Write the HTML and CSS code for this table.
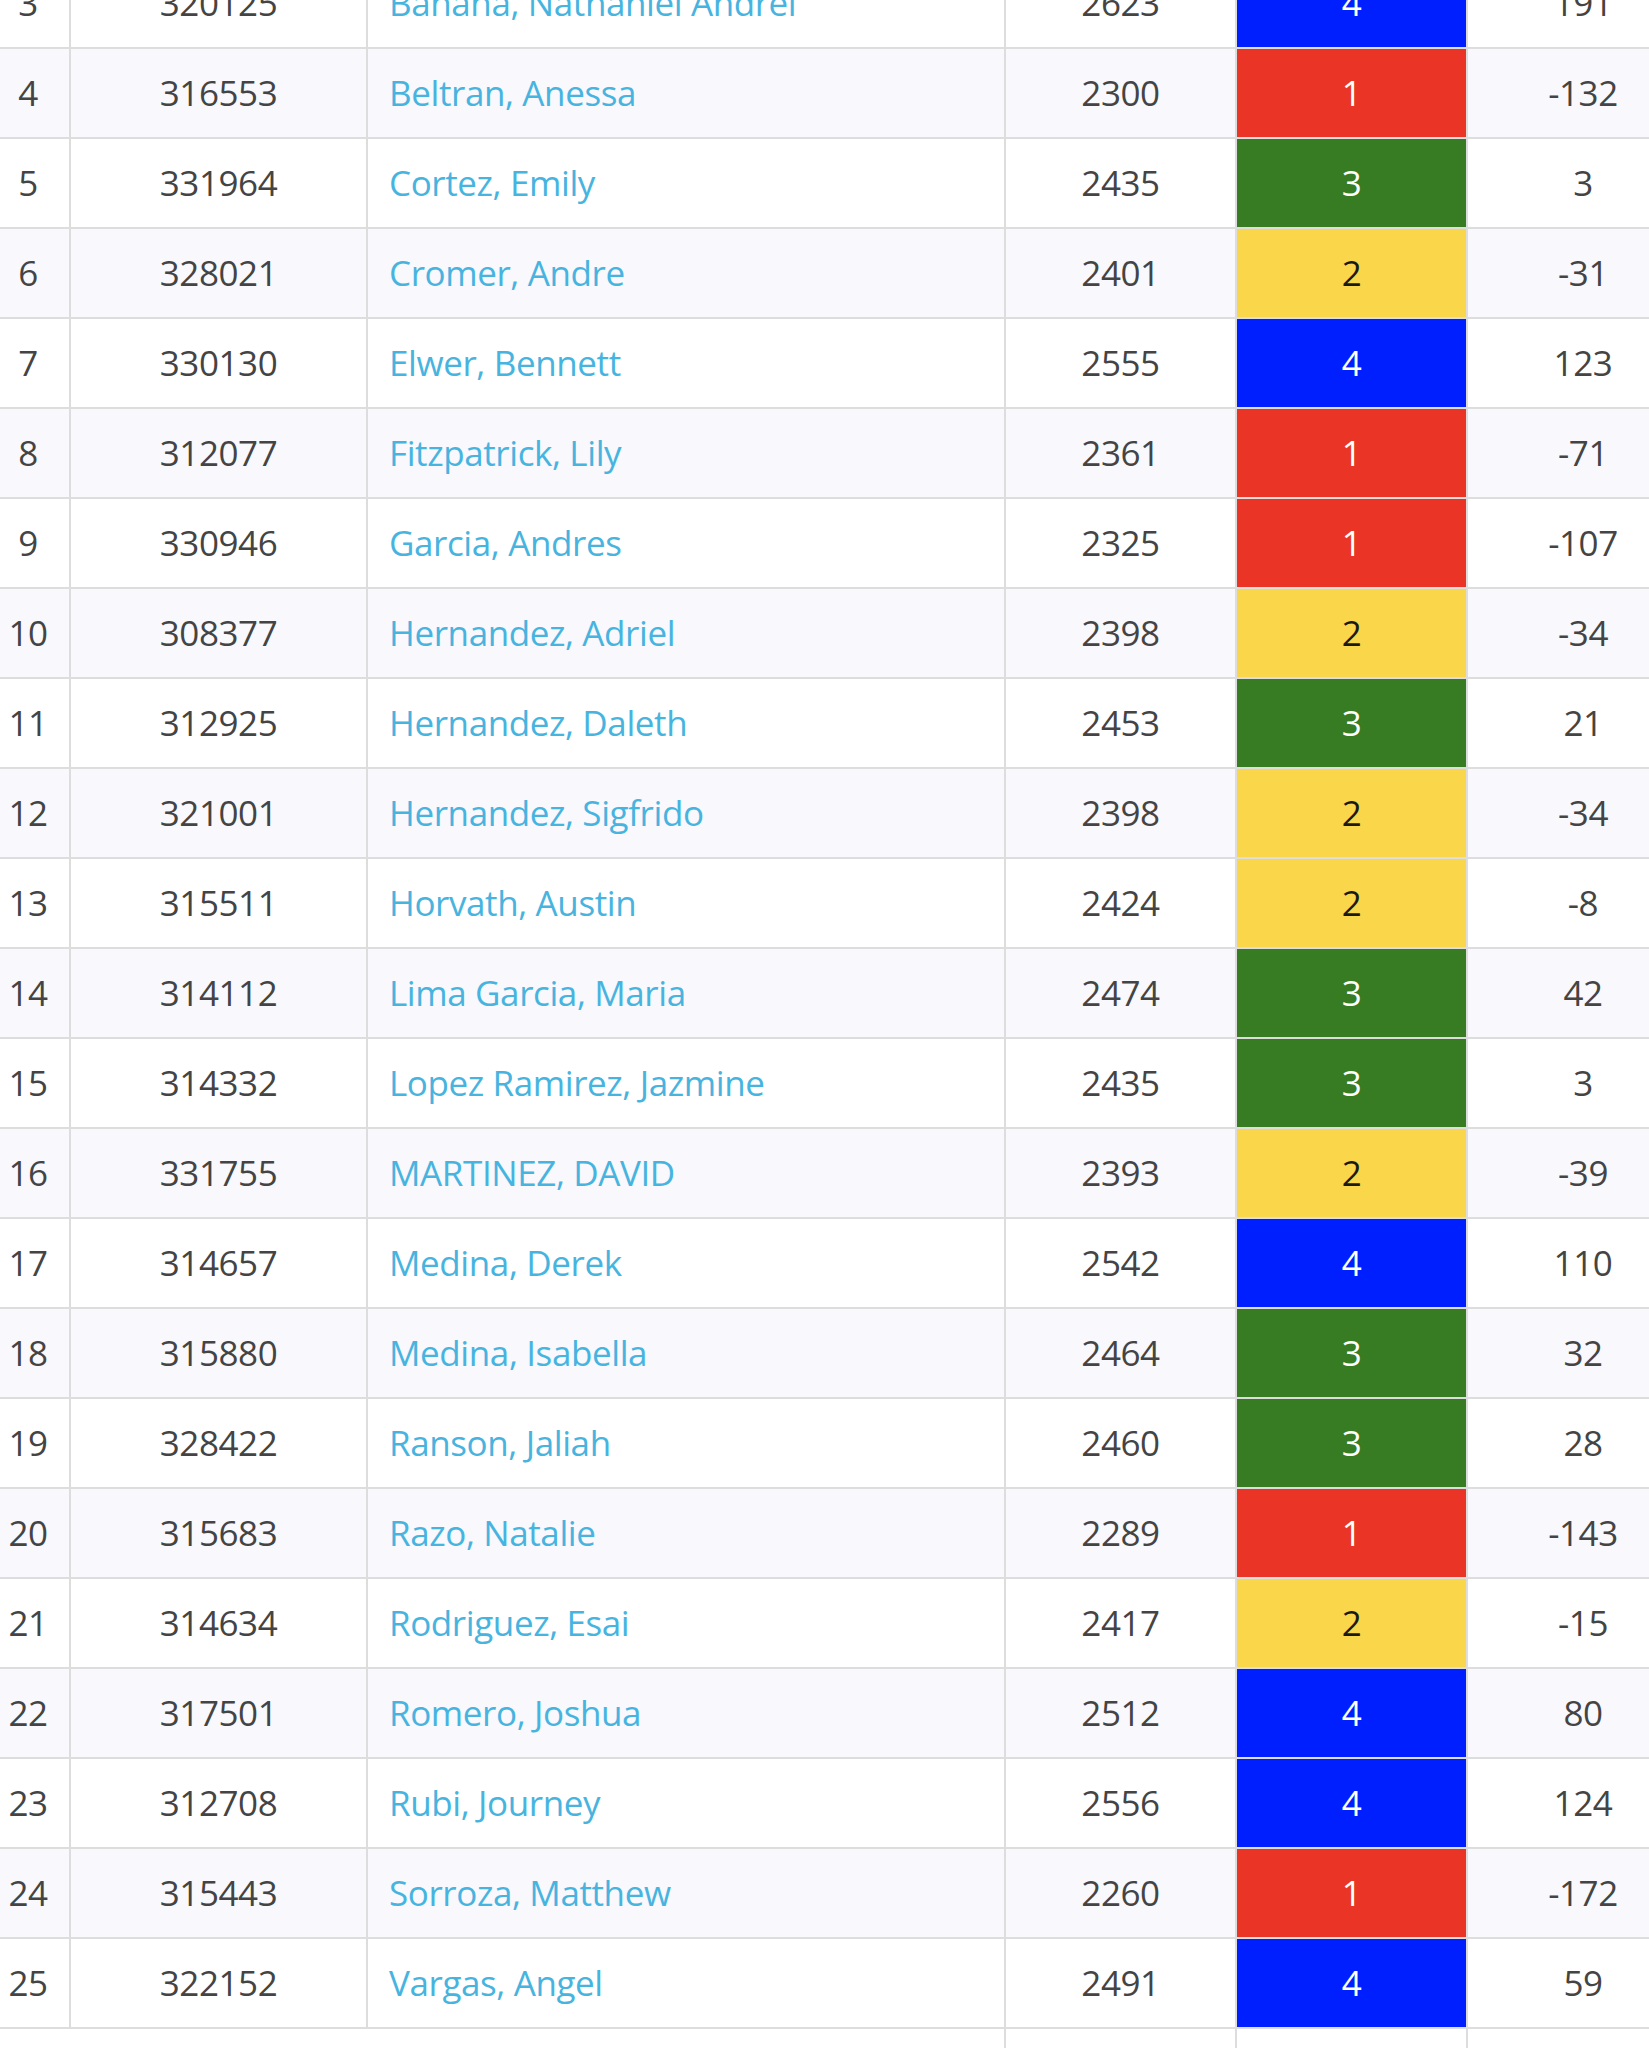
FILE: index.html
```html
<!DOCTYPE html>
<html lang="en">
<head>
<meta charset="utf-8">
<title>Roster</title>
<link rel="stylesheet" href="styles.css">
</head>
<body>
<div class="wrap">
<table class="roster">
<colgroup>
<col class="c-rank"><col class="c-id"><col class="c-name"><col class="c-score"><col class="c-level"><col class="c-diff">
</colgroup>
<tbody>
<tr><td class="rank">3</td><td class="num">320125</td><td class="name"><a href="#">Banana, Nathaniel Andrel</a></td><td class="num">2623</td><td class="lvl l4">4</td><td class="num">191</td></tr>
<tr><td class="rank">4</td><td class="num">316553</td><td class="name"><a href="#">Beltran, Anessa</a></td><td class="num">2300</td><td class="lvl l1">1</td><td class="num">-132</td></tr>
<tr><td class="rank">5</td><td class="num">331964</td><td class="name"><a href="#">Cortez, Emily</a></td><td class="num">2435</td><td class="lvl l3">3</td><td class="num">3</td></tr>
<tr><td class="rank">6</td><td class="num">328021</td><td class="name"><a href="#">Cromer, Andre</a></td><td class="num">2401</td><td class="lvl l2">2</td><td class="num">-31</td></tr>
<tr><td class="rank">7</td><td class="num">330130</td><td class="name"><a href="#">Elwer, Bennett</a></td><td class="num">2555</td><td class="lvl l4">4</td><td class="num">123</td></tr>
<tr><td class="rank">8</td><td class="num">312077</td><td class="name"><a href="#">Fitzpatrick, Lily</a></td><td class="num">2361</td><td class="lvl l1">1</td><td class="num">-71</td></tr>
<tr><td class="rank">9</td><td class="num">330946</td><td class="name"><a href="#">Garcia, Andres</a></td><td class="num">2325</td><td class="lvl l1">1</td><td class="num">-107</td></tr>
<tr><td class="rank">10</td><td class="num">308377</td><td class="name"><a href="#">Hernandez, Adriel</a></td><td class="num">2398</td><td class="lvl l2">2</td><td class="num">-34</td></tr>
<tr><td class="rank">11</td><td class="num">312925</td><td class="name"><a href="#">Hernandez, Daleth</a></td><td class="num">2453</td><td class="lvl l3">3</td><td class="num">21</td></tr>
<tr><td class="rank">12</td><td class="num">321001</td><td class="name"><a href="#">Hernandez, Sigfrido</a></td><td class="num">2398</td><td class="lvl l2">2</td><td class="num">-34</td></tr>
<tr><td class="rank">13</td><td class="num">315511</td><td class="name"><a href="#">Horvath, Austin</a></td><td class="num">2424</td><td class="lvl l2">2</td><td class="num">-8</td></tr>
<tr><td class="rank">14</td><td class="num">314112</td><td class="name"><a href="#">Lima Garcia, Maria</a></td><td class="num">2474</td><td class="lvl l3">3</td><td class="num">42</td></tr>
<tr><td class="rank">15</td><td class="num">314332</td><td class="name"><a href="#">Lopez Ramirez, Jazmine</a></td><td class="num">2435</td><td class="lvl l3">3</td><td class="num">3</td></tr>
<tr><td class="rank">16</td><td class="num">331755</td><td class="name"><a href="#">MARTINEZ, DAVID</a></td><td class="num">2393</td><td class="lvl l2">2</td><td class="num">-39</td></tr>
<tr><td class="rank">17</td><td class="num">314657</td><td class="name"><a href="#">Medina, Derek</a></td><td class="num">2542</td><td class="lvl l4">4</td><td class="num">110</td></tr>
<tr><td class="rank">18</td><td class="num">315880</td><td class="name"><a href="#">Medina, Isabella</a></td><td class="num">2464</td><td class="lvl l3">3</td><td class="num">32</td></tr>
<tr><td class="rank">19</td><td class="num">328422</td><td class="name"><a href="#">Ranson, Jaliah</a></td><td class="num">2460</td><td class="lvl l3">3</td><td class="num">28</td></tr>
<tr><td class="rank">20</td><td class="num">315683</td><td class="name"><a href="#">Razo, Natalie</a></td><td class="num">2289</td><td class="lvl l1">1</td><td class="num">-143</td></tr>
<tr><td class="rank">21</td><td class="num">314634</td><td class="name"><a href="#">Rodriguez, Esai</a></td><td class="num">2417</td><td class="lvl l2">2</td><td class="num">-15</td></tr>
<tr><td class="rank">22</td><td class="num">317501</td><td class="name"><a href="#">Romero, Joshua</a></td><td class="num">2512</td><td class="lvl l4">4</td><td class="num">80</td></tr>
<tr><td class="rank">23</td><td class="num">312708</td><td class="name"><a href="#">Rubi, Journey</a></td><td class="num">2556</td><td class="lvl l4">4</td><td class="num">124</td></tr>
<tr><td class="rank">24</td><td class="num">315443</td><td class="name"><a href="#">Sorroza, Matthew</a></td><td class="num">2260</td><td class="lvl l1">1</td><td class="num">-172</td></tr>
<tr><td class="rank">25</td><td class="num">322152</td><td class="name"><a href="#">Vargas, Angel</a></td><td class="num">2491</td><td class="lvl l4">4</td><td class="num">59</td></tr>
</tbody>
<tfoot>
<tr><td class="foot" colspan="3"></td><td class="foot"></td><td class="foot"></td><td class="foot"></td></tr>
</tfoot>
</table>
</div>
</body>
</html>
```

FILE: styles.css
```css
html, body {
  margin: 0;
  padding: 0;
  background: #ffffff;
  overflow: hidden;
}

.wrap {
  width: 100%;
  overflow: hidden;
}

.roster {
  table-layout: fixed;
  border-collapse: separate;
  border-spacing: 0;
  width: 1713px;
  margin: -41px 0 0 -13px;
  font-family: "Open Sans", "DejaVu Sans", sans-serif;
  font-size: 35px;
  letter-spacing: -0.4px;
  color: #444444;
}

.c-rank { width: 84px; }
.c-id { width: 297px; }
.c-name { width: 638px; }
.c-score { width: 231px; }
.c-level { width: 231px; }
.c-diff { width: 232px; }

.roster td {
  box-sizing: border-box;
  height: 90px;
  padding: 0;
  line-height: 52px;
  text-align: center;
  vertical-align: middle;
  border-right: 2px solid #dddddd;
  border-bottom: 2px solid #dddddd;
  white-space: nowrap;
  overflow: hidden;
}

.roster tbody tr:nth-child(even) td {
  background: #f8f8fd;
}

.roster td.name {
  text-align: left;
  padding: 0 21px;
}

.roster td.name a {
  color: #47b4e0;
  text-decoration: none;
}

.roster tbody tr td.lvl { color: #ffffff; }
.roster tbody tr td.l1 { background: #e93426; }
.roster tbody tr td.l2 { background: #f9d64a; color: #1a1a1a; }
.roster tbody tr td.l3 { background: #377b22; }
.roster tbody tr td.l4 { background: #001ffe; }

.roster td.foot {
  height: 60px;
  border-bottom: none;
}
```
